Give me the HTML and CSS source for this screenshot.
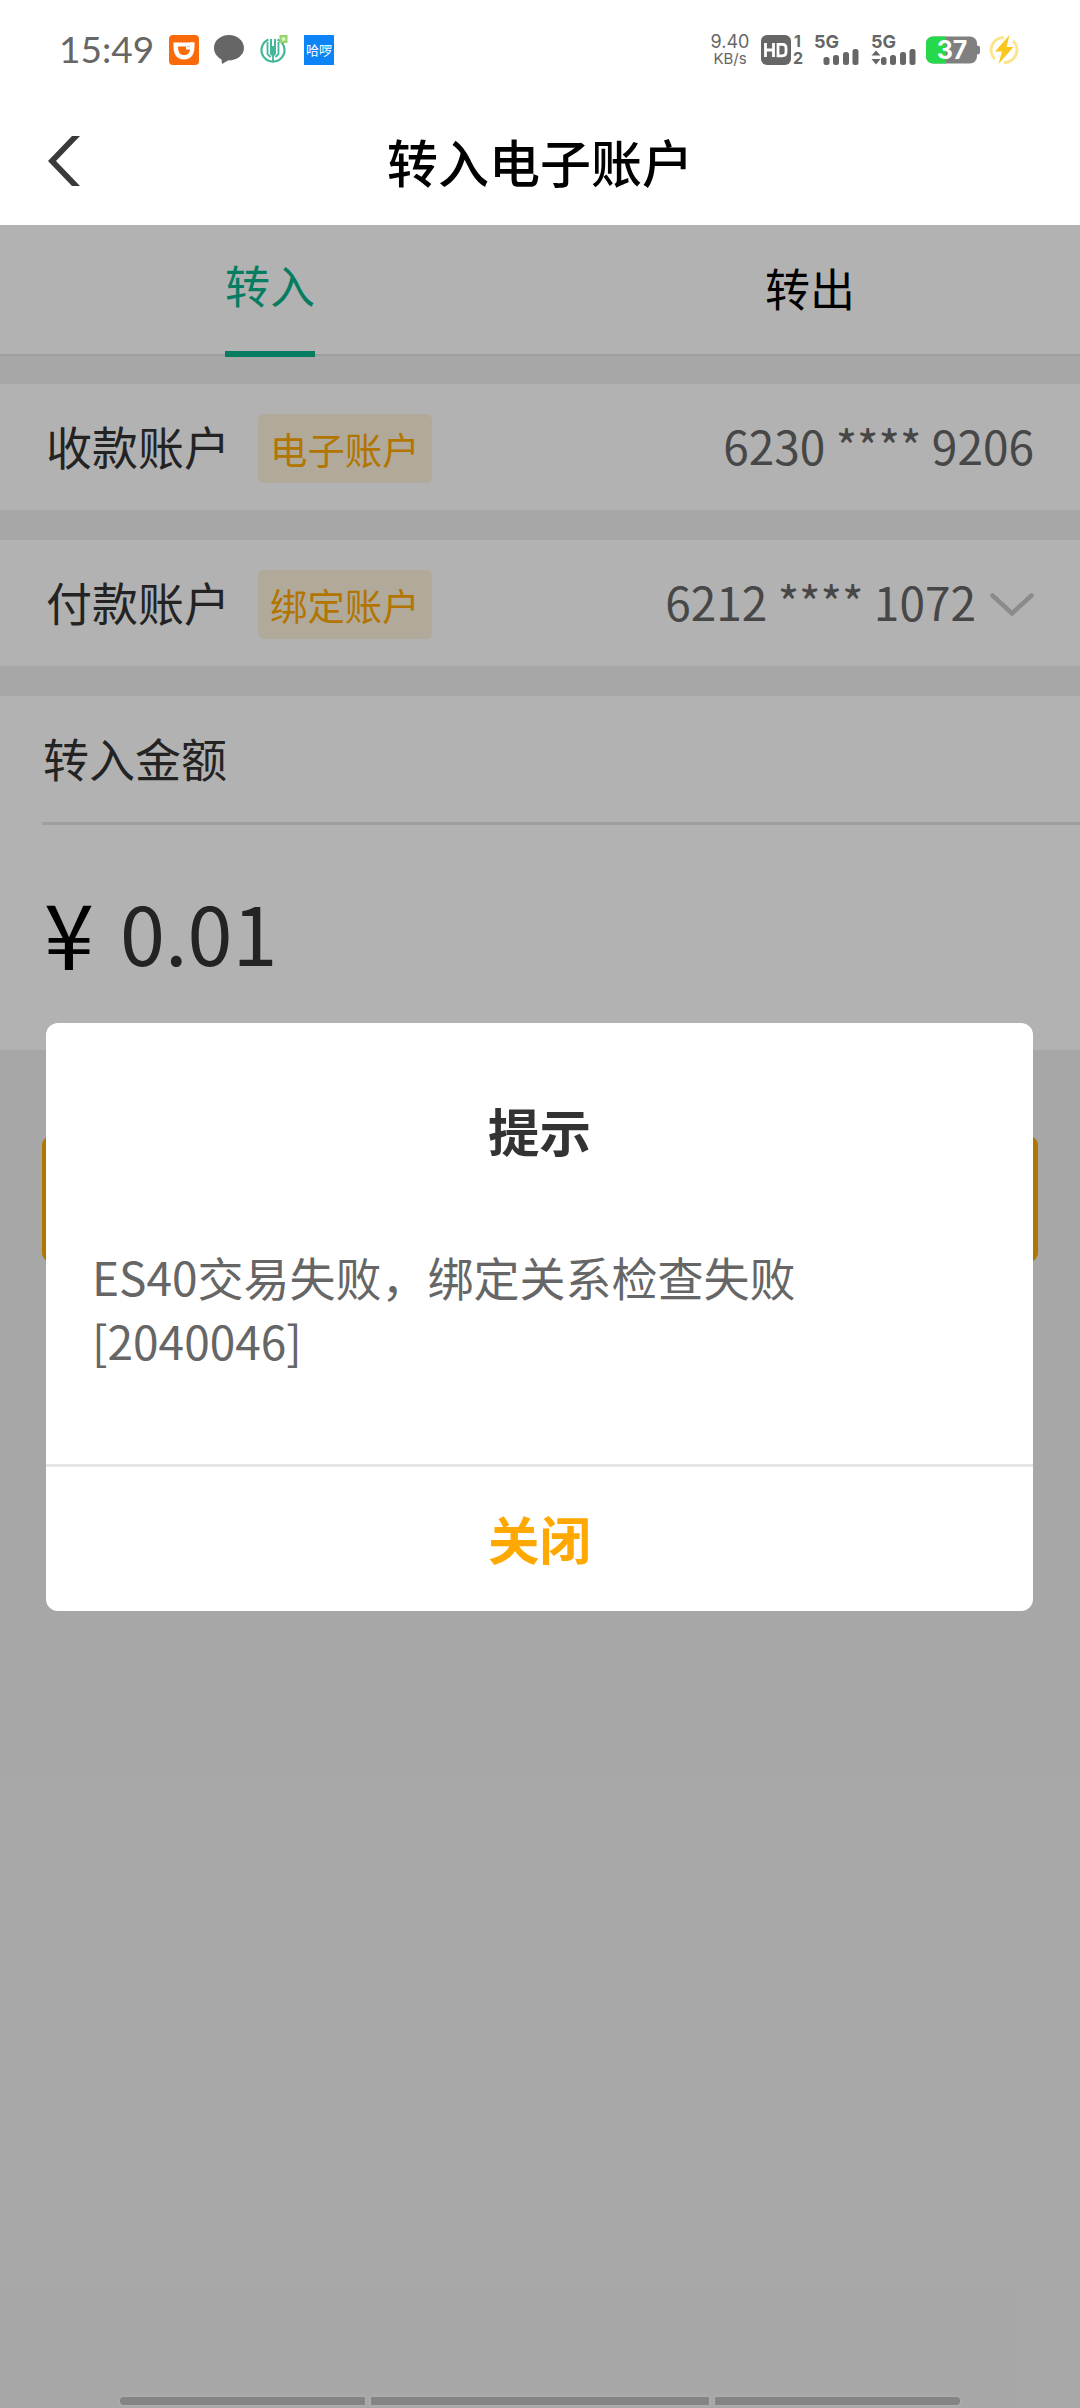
FILE: index.html
```
<!DOCTYPE html>
<html lang="zh-CN">

<head>
    <meta charset="UTF-8">
    <title>转入电子账户</title>
    <link rel="stylesheet" href="styles.css">
</head>

<body>
    <!-- status bar -->
    <div class="status-bar">
        <span class="time">15:49</span>
        <div class="apps">
            <svg width="30" height="30" viewBox="0 0 30 30">
                <rect width="30" height="30" rx="4" fill="#fb6a0a" />
                <path d="M4.500 7.500H18v4h3v-4h4.500v4c0 8-3.500 13-10.500 13S4.500 19.500 4.500 11.500z" fill="#fff" />
                <path d="M9 11.500h8v3h4c-.5 4-2.500 5.500-6 5.500-4 0-6-2.500-6-8.500z" fill="#fb6a0a" />
                <path d="M18 7.500h7v3.500h-7z" fill="#fff" />
            </svg>
            <svg width="30" height="30" viewBox="0 0 30 30">
                <path d="M15 0C6.500 0 0 5.500 0 13c0 5 3 9 7.500 11.500L8 29l6-3.500C23 25.500 30 20 30 13S23.500 0 15 0z" fill="#666" />
            </svg>
            <svg width="30" height="30" viewBox="0 0 30 30">
                <path d="M9.500 4.500a11.500 11.500 0 1 0 9 0" fill="none" stroke="#44b798" stroke-width="2.200" />
                <path d="M14 16v10M8.500 7v12l3 3M19.500 7v12l-3 3" fill="none" stroke="#44b798" stroke-width="1.800" />
                <path d="M12 4v8h4V4" fill="none" stroke="#44b798" stroke-width="2" />
                <path d="M11 11h6v8l-3 3-3-3z" fill="#44b798" />
                <rect x="20.500" y="0" width="8" height="8" fill="#95d36b" />
                <circle cx="24.500" cy="4" r="2" fill="#d9f2c6" />
            </svg>
            <svg width="30" height="30" viewBox="0 0 30 30">
                <rect width="30" height="30" fill="#0d84f5" />
                <text x="15" y="20" class="hello-text">哈啰</text>
            </svg>
        </div>
        <div class="net-speed">
            <span class="speed">9.40</span>
            <span class="unit">KB/s</span>
        </div>
        <svg class="hd" width="44" height="34" viewBox="0 0 44 34">
            <rect y="2" width="30" height="30" rx="6" fill="#666" />
            <path d="M4.500 10v14M12.500 10v14M4.500 17h8M17 11.300h4.500q3.500 0 3.500 3.500v4.500q0 3.500-3.500 3.500H17z" fill="none" stroke="#fff" stroke-width="2.800" />
            <text x="33" y="14" class="sim">1</text>
            <text x="32" y="31" class="sim">2</text>
        </svg>
        <svg class="signal" width="46" height="34" viewBox="0 0 46 34">
            <text x="0" y="15" class="net">5G</text>
            <g fill="#666">
                <rect x="9.500" y="24" width="6" height="8" rx="2.500" />
                <rect x="19" y="22" width="6" height="10" rx="2.500" />
                <rect x="29" y="19" width="6" height="13" rx="2.500" />
                <rect x="38.500" y="16" width="6" height="16" rx="2.500" />
            </g>
        </svg>
        <svg class="signal2" width="46" height="34" viewBox="0 0 46 34">
            <text x="0" y="15" class="net">5G</text>
            <g fill="#666">
                <path d="M.500 22.500L5 17.500l4.500 5zM.500 26L5 31.500 9.500 26z" />
                <rect x="10" y="24" width="5.500" height="8" rx="2.500" />
                <rect x="19" y="22" width="6" height="10" rx="2.500" />
                <rect x="29" y="19" width="6" height="13" rx="2.500" />
                <rect x="38.500" y="16" width="6" height="16" rx="2.500" />
            </g>
        </svg>
        <svg class="battery" width="54" height="28" viewBox="0 0 54 28">
            <rect x="0" y="0.500" width="51" height="27" rx="7" fill="#808080" />
            <path d="M7 .500h13v27H7a7 7 0 0 1-7-7v-13a7 7 0 0 1 7-7z" fill="#26d94a" />
            <path d="M51 9.500q3 0 3 2.500v4q0 2.500-3 2.500z" fill="#808080" />
            <text x="26" y="23" class="percent">37</text>
        </svg>
        <svg class="flash" width="30" height="30" viewBox="0 0 30 30">
            <path d="M15 2.500A12.500 12.500 0 0 0 6 24M15 27.500A12.500 12.500 0 0 0 24 6" fill="none" stroke="#fbe58c" stroke-width="3" />
            <path d="M20.500 0L6 16.500h7L9.500 29 24.500 12h-7z" fill="#fcc61c" />
        </svg>
    </div>

    <!-- title bar -->
    <div class="header">
        <svg class="back" width="32" height="50" viewBox="0 0 32 50">
            <path d="M24 0h8L8 25l24 25h-8L0 25z" fill="#3a3a3a" />
        </svg>
        <h1>转入电子账户</h1>
    </div>

    <div class="page">
        <div class="tabs">
            <div class="tab active"><span>转入</span></div>
            <div class="tab"><span>转出</span></div>
        </div>

        <div class="row">
            <span class="label">收款账户</span>
            <span class="tag">电子账户</span>
            <span class="account">6230 **** 9206</span>
        </div>

        <div class="row">
            <span class="label">付款账户</span>
            <span class="tag">绑定账户</span>
            <span class="account">6212 **** 1072</span>
            <svg class="arrow" width="44" height="26" viewBox="0 0 44 26">
                <path d="M2.500 3.500L22 21.500 41.500 3.500" fill="none" stroke="#c8c8c8" stroke-width="4.500" stroke-linecap="round" />
            </svg>
        </div>

        <div class="amount-box">
            <div class="amount-title">转入金额</div>
            <div class="amount">
                <span class="yen">¥</span>
                <span class="number">0.01</span>
            </div>
        </div>

        <div class="submit"></div>

        <!-- popup -->
        <div class="mask">
            <div class="dialog">
                <h2>提示</h2>
                <p>ES40交易失败，绑定关系检查失败[2040046]</p>
                <div class="close">关闭</div>
            </div>
        </div>

        <div class="home-bar">
            <i></i>
            <i class="middle"></i>
            <i></i>
        </div>
    </div>
</body>

</html>
```
FILE: styles.css
```
* {
    box-sizing: border-box;
}

body {
    margin: 0;
    width: 1080px;
    height: 2408px;
    display: flex;
    flex-direction: column;
    overflow: hidden;
    background-color: white;
    font-family: "Noto Sans CJK SC", sans-serif;
    font-size: 46px;
    line-height: 64px;
    color: #333;
}

svg {
    display: block;
    flex: none;
    overflow: visible;
}

.status-bar {
    height: 100px;
    padding-left: 59px;
    display: flex;
    align-items: center;
    color: #666;
}

.time {
    width: 110px;
    padding-bottom: 3px;
    font-family: Lato, sans-serif;
    font-size: 37px;
}

.apps {
    display: flex;
    gap: 15px;
}

.net-speed {
    width: 40px;
    margin-left: 376px;
    display: flex;
    flex-direction: column;
    align-items: center;
    font-family: Inter, sans-serif;
}

.speed {
    font-size: 18px;
    line-height: 18px;
}

.unit {
    font-size: 15px;
    line-height: 16px;
}

.hd {
    margin-left: 11px;
}

.signal {
    margin-left: 9px;
}

.signal2 {
    margin-left: 11px;
}

.battery {
    margin-left: 9px;
}

.flash {
    margin-left: 9px;
}

.hello-text {
    font-family: "Noto Sans CJK SC", sans-serif;
    font-size: 13px;
    fill: white;
    text-anchor: middle;
}

.sim {
    font-family: Inter, sans-serif;
    font-size: 16px;
    font-weight: 700;
    fill: #666;
}

.net {
    font-family: Inter, sans-serif;
    font-size: 18px;
    font-weight: 700;
    fill: #666;
}

.percent {
    font-family: Inter, sans-serif;
    font-size: 25px;
    font-weight: 700;
    fill: white;
    text-anchor: middle;
}

.header {
    height: 125px;
    padding: 0 48px 3px;
    display: flex;
    align-items: center;
}

.header h1 {
    flex: 1;
    margin: 0 32px 0 0;
    font-size: 51px;
    font-weight: 500;
    color: black;
    text-align: center;
}

.page {
    flex: 1;
    position: relative;
    background-color: #f0f0f0;
}

.tabs {
    height: 131px;
    margin-bottom: 28px;
    display: flex;
    background-color: white;
    border-bottom: 2px solid #e4e4e4;
}

.tab {
    flex: 1;
    height: 132px;
    padding-top: 31px;
    display: flex;
    justify-content: center;
    font-size: 45px;
    color: black;
}

.active {
    padding-top: 28px;
    color: #0ab48c;
}

.active span {
    border-bottom: 6px solid #0ab48c;
}

.row {
    height: 126px;
    margin-bottom: 30px;
    padding: 0 46px 4px;
    display: flex;
    align-items: center;
    background-color: white;
}

.tag {
    height: 69px;
    margin: 7px 0 0 28px;
    padding: 1px 12px 0;
    font-size: 37.400px;
    line-height: 69px;
    border-radius: 6px;
    background-color: #fef4df;
    color: #ffaa00;
}

.account {
    margin-left: auto;
    color: #666;
}

.arrow {
    margin: 7px 0 0 14px;
}

.amount-box {
    height: 354px;
    padding-left: 42px;
    background-color: white;
}

.amount-title {
    height: 129px;
    padding: 29px 0 0 1px;
    border-bottom: 3px solid #e4e4e4;
}

.amount {
    height: 225px;
    padding: 0 0 13px 2px;
    display: flex;
    align-items: center;
}

.yen {
    font-size: 90px;
    color: black;
}

.number {
    margin-left: 26px;
    font-size: 81px;
}

.submit {
    height: 126px;
    margin: 86px 42px 0;
    border-radius: 9px;
    background-color: #ffaa00;
}

.mask {
    position: absolute;
    inset: 0;
    display: flex;
    justify-content: center;
    align-items: center;
    background-color: rgba(0, 0, 0, 0.3);
}

.dialog {
    width: 987px;
    height: 588px;
    margin-right: 1px;
    display: flex;
    flex-direction: column;
    border-radius: 12px;
    background-color: white;
}

.dialog h2 {
    margin: 77px 0 84px;
    font-size: 51.500px;
    font-weight: 700;
    line-height: 60px;
    text-align: center;
}

.dialog p {
    flex: 1;
    margin: 0;
    padding: 0 46px;
    color: #666;
    word-break: normal;
}

.close {
    height: 147px;
    padding-top: 39px;
    border-top: 3px solid #e6e6e6;
    font-size: 51.500px;
    font-weight: 700;
    text-align: center;
    color: #ffa800;
}

/* system gesture bar at the bottom of the screen */
.home-bar {
    position: absolute;
    left: 120px;
    right: 120px;
    bottom: 3px;
    height: 8px;
    display: flex;
    gap: 6px;
}

.home-bar i {
    width: 245px;
    background-color: #848484;
    box-shadow: 0 0 2px 1px #b0b0b0;
}

.home-bar .middle {
    flex: 1;
}

.home-bar i:first-child {
    border-radius: 4px 0 0 4px;
}

.home-bar i:last-child {
    border-radius: 0 4px 4px 0;
}
```
